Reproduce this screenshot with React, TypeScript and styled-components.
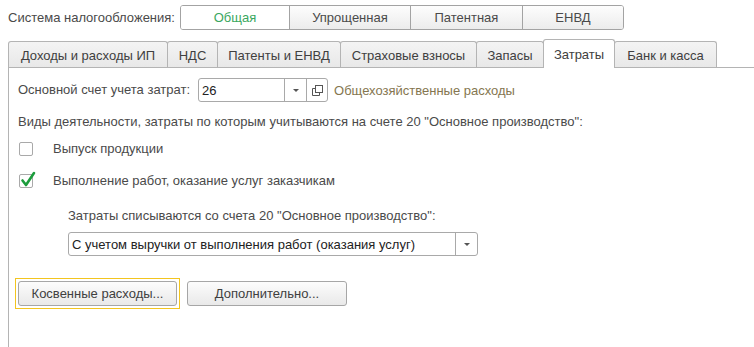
import styled, { createGlobalStyle } from "styled-components";

const Global = createGlobalStyle`
  body {
    margin: 0;
    background: #fff;
    font-family: "Liberation Sans", Arial, sans-serif;
    font-size: 13px;
    color: #4a4a4a;
  }
`;

const Page = styled.div`
  width: 754px;
  height: 347px;
  padding: 5px 0 0 8px;
  box-sizing: border-box;
  display: flex;
  flex-direction: column;
  overflow: hidden;
`;

const TopRow = styled.div`
  display: flex;
  align-items: center;
  height: 25px;
`;

const Label = styled.span`
  line-height: 16px;
  white-space: nowrap;
`;

const Segmented = styled.div`
  display: flex;
  margin-left: 5px;
  height: 25px;
  border: 1px solid #a3a3a3;
  border-radius: 3px;
  overflow: hidden;
  box-sizing: border-box;
`;

const Segment = styled.div<{ $w: number; $active?: boolean }>`
  width: ${(p) => p.$w}px;
  display: flex;
  align-items: center;
  justify-content: center;
  color: ${(p) => (p.$active ? "#3aa760" : "#4a4a4a")};
  background: ${(p) =>
    p.$active ? "#fff" : "linear-gradient(#fdfdfd, #ececec)"};
  & + & {
    border-left: 1px solid #a3a3a3;
  }
`;

const TabStrip = styled.div`
  display: flex;
  align-items: flex-end;
  margin-top: 10px;
  height: 28px;
  border-bottom: 1px solid #b4b4b4;
  box-sizing: border-box;
`;

const Tab = styled.div<{ $w: number; $active?: boolean }>`
  width: ${(p) => p.$w}px;
  height: ${(p) => (p.$active ? 29 : 26)}px;
  margin-bottom: ${(p) => (p.$active ? -1 : 0)}px;
  box-sizing: border-box;
  display: flex;
  align-items: center;
  justify-content: center;
  padding-top: ${(p) => (p.$active ? 0 : 1)}px;
  border: 1px solid #b4b4b4;
  border-bottom: 0;
  border-radius: 3px 3px 0 0;
  background: ${(p) => (p.$active ? "#fff" : "linear-gradient(#f4f4f4, #e8e8e8)")};
  color: #404040;
  white-space: nowrap;
  & + & {
    margin-left: -1px;
  }
`;

const Panel = styled.div`
  flex: 1;
  border-left: 1px solid #b4b4b4;
  padding: 10px 0 0 9px;
  display: flex;
  flex-direction: column;
`;

const FieldRow = styled.div`
  display: flex;
  align-items: center;
  height: 24px;
`;

const Input = styled.div<{ $w: number }>`
  display: flex;
  width: ${(p) => p.$w}px;
  height: 24px;
  box-sizing: border-box;
  border: 1px solid #a9a9a9;
  border-radius: 3px;
  color: #222;
`;

const AccountInput = styled(Input)`
  margin-left: 8px;
`;

const InputText = styled.div`
  flex: 1;
  padding-left: 3px;
  display: flex;
  align-items: center;
  white-space: nowrap;
  overflow: hidden;
`;

const InputButton = styled.div<{ $w: number }>`
  width: ${(p) => p.$w}px;
  border-left: 1px solid #a9a9a9;
  display: flex;
  align-items: center;
  justify-content: center;
`;

const Arrow = styled.span`
  width: 0;
  height: 0;
  border-left: 3px solid transparent;
  border-right: 3px solid transparent;
  border-top: 3px solid #555;
  margin-top: 1px;
`;

const Link = styled.span`
  margin-left: 6px;
  color: #857650;
  white-space: nowrap;
`;

const Text = styled.div<{ $top: number; $indent?: number }>`
  margin-top: ${(p) => p.$top}px;
  margin-left: ${(p) => p.$indent ?? 0}px;
  line-height: 16px;
  white-space: nowrap;
`;

const CheckRow = styled.div<{ $top: number }>`
  display: flex;
  align-items: center;
  height: 18px;
  margin-top: ${(p) => p.$top}px;
  margin-left: 1px;
`;

const Box = styled.div`
  position: relative;
  width: 14px;
  height: 14px;
  box-sizing: border-box;
  border: 1px solid #a9a9a9;
  border-radius: 2px;
  margin-right: 20px;
  background: #fff;
  svg {
    position: absolute;
    left: 0;
    top: -4px;
  }
`;

const Select = styled(Input)`
  margin-top: 8px;
  margin-left: 50px;
`;

const Buttons = styled.div`
  display: flex;
  align-items: center;
  gap: 7px;
  margin-top: 22px;
  margin-left: -3px;
`;

const Focus = styled.div`
  border: 1px solid #f3c51f;
  padding: 2px;
`;

const Button = styled.div<{ $w: number }>`
  width: ${(p) => p.$w}px;
  height: 25px;
  box-sizing: border-box;
  border: 1px solid #a6a6a6;
  border-radius: 3px;
  background: linear-gradient(#fcfcfc, #e9e9e9);
  display: flex;
  align-items: center;
  justify-content: center;
  color: #404040;
`;

const OpenIcon = () => (
  <svg width="11" height="11" viewBox="0 0 11 11">
    <rect x="3.5" y="0.5" width="7" height="7" fill="none" stroke="#555" />
    <path d="M3.5 3.5H0.5V10.5H7.5V7.5" fill="none" stroke="#555" />
  </svg>
);

const Check = () => (
  <svg width="18" height="18" viewBox="0 0 18 18">
    <path
      d="M2.5 9.5 L6 14 L14 2"
      fill="none"
      stroke="#1c9c3c"
      strokeWidth="2.6"
      strokeLinecap="round"
      strokeLinejoin="round"
    />
  </svg>
);

const segments = [
  { label: "Общая", w: 108, active: true },
  { label: "Упрощенная", w: 120 },
  { label: "Патентная", w: 111 },
  { label: "ЕНВД", w: 100 },
];

const tabs = [
  { label: "Доходы и расходы ИП", w: 160 },
  { label: "НДС", w: 51 },
  { label: "Патенты и ЕНВД", w: 124 },
  { label: "Страховые взносы", w: 137 },
  { label: "Запасы", w: 68 },
  { label: "Затраты", w: 72, active: true },
  { label: "Банк и касса", w: 103 },
];

export default function App() {
  return (
    <Page>
      <Global />
      <TopRow>
        <Label>Система налогообложения:</Label>
        <Segmented>
          {segments.map((s) => (
            <Segment key={s.label} $w={s.w} $active={s.active}>
              {s.label}
            </Segment>
          ))}
        </Segmented>
      </TopRow>

      <TabStrip>
        {tabs.map((t) => (
          <Tab key={t.label} $w={t.w} $active={t.active}>
            {t.label}
          </Tab>
        ))}
      </TabStrip>

      <Panel>
        <FieldRow>
          <Label>Основной счет учета затрат:</Label>
          <AccountInput $w={130}>
            <InputText>26</InputText>
            <InputButton $w={21}>
              <Arrow />
            </InputButton>
            <InputButton $w={20}>
              <OpenIcon />
            </InputButton>
          </AccountInput>
          <Link>Общехозяйственные расходы</Link>
        </FieldRow>

        <Text $top={12}>
          Виды деятельности, затраты по которым учитываются на счете 20 "Основное производство":
        </Text>

        <CheckRow $top={10}>
          <Box />
          <Label>Выпуск продукции</Label>
        </CheckRow>
        <CheckRow $top={14}>
          <Box>
            <Check />
          </Box>
          <Label>Выполнение работ, оказание услуг заказчикам</Label>
        </CheckRow>

        <Text $top={18} $indent={50}>
          Затраты списываются со счета 20 "Основное производство":
        </Text>
        <Select $w={410}>
          <InputText>С учетом выручки от выполнения работ (оказания услуг)</InputText>
          <InputButton $w={21}>
            <Arrow />
          </InputButton>
        </Select>

        <Buttons>
          <Focus>
            <Button $w={159}>Косвенные расходы...</Button>
          </Focus>
          <Button $w={160}>Дополнительно...</Button>
        </Buttons>
      </Panel>
    </Page>
  );
}
